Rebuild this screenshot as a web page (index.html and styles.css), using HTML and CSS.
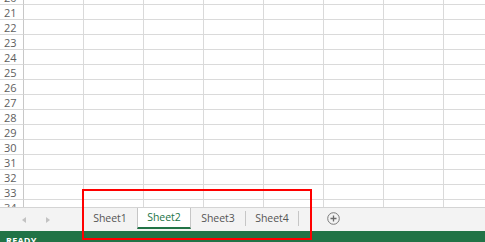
FILE: index.html
```html
<!DOCTYPE html>
<html lang="en">
<head>
    <meta charset="UTF-8">
    <title>Workbook</title>
    <link rel="stylesheet" href="styles.css">
</head>
<body>
    <div class="sheet">
        <div class="grid">
            <div class="row"><div class="rh">20</div><div class="c"></div><div class="c"></div><div class="c"></div><div class="c"></div><div class="c"></div><div class="c"></div><div class="c"></div><div class="c"></div></div>
            <div class="row"><div class="rh">21</div><div class="c"></div><div class="c"></div><div class="c"></div><div class="c"></div><div class="c"></div><div class="c"></div><div class="c"></div><div class="c"></div></div>
            <div class="row"><div class="rh">22</div><div class="c"></div><div class="c"></div><div class="c"></div><div class="c"></div><div class="c"></div><div class="c"></div><div class="c"></div><div class="c"></div></div>
            <div class="row"><div class="rh">23</div><div class="c"></div><div class="c"></div><div class="c"></div><div class="c"></div><div class="c"></div><div class="c"></div><div class="c"></div><div class="c"></div></div>
            <div class="row"><div class="rh">24</div><div class="c"></div><div class="c"></div><div class="c"></div><div class="c"></div><div class="c"></div><div class="c"></div><div class="c"></div><div class="c"></div></div>
            <div class="row"><div class="rh">25</div><div class="c"></div><div class="c"></div><div class="c"></div><div class="c"></div><div class="c"></div><div class="c"></div><div class="c"></div><div class="c"></div></div>
            <div class="row"><div class="rh">26</div><div class="c"></div><div class="c"></div><div class="c"></div><div class="c"></div><div class="c"></div><div class="c"></div><div class="c"></div><div class="c"></div></div>
            <div class="row"><div class="rh">27</div><div class="c"></div><div class="c"></div><div class="c"></div><div class="c"></div><div class="c"></div><div class="c"></div><div class="c"></div><div class="c"></div></div>
            <div class="row"><div class="rh">28</div><div class="c"></div><div class="c"></div><div class="c"></div><div class="c"></div><div class="c"></div><div class="c"></div><div class="c"></div><div class="c"></div></div>
            <div class="row"><div class="rh">29</div><div class="c"></div><div class="c"></div><div class="c"></div><div class="c"></div><div class="c"></div><div class="c"></div><div class="c"></div><div class="c"></div></div>
            <div class="row"><div class="rh">30</div><div class="c"></div><div class="c"></div><div class="c"></div><div class="c"></div><div class="c"></div><div class="c"></div><div class="c"></div><div class="c"></div></div>
            <div class="row"><div class="rh">31</div><div class="c"></div><div class="c"></div><div class="c"></div><div class="c"></div><div class="c"></div><div class="c"></div><div class="c"></div><div class="c"></div></div>
            <div class="row"><div class="rh">32</div><div class="c"></div><div class="c"></div><div class="c"></div><div class="c"></div><div class="c"></div><div class="c"></div><div class="c"></div><div class="c"></div></div>
            <div class="row"><div class="rh">33</div><div class="c"></div><div class="c"></div><div class="c"></div><div class="c"></div><div class="c"></div><div class="c"></div><div class="c"></div><div class="c"></div></div>
            <div class="row"><div class="rh">34</div><div class="c"></div><div class="c"></div><div class="c"></div><div class="c"></div><div class="c"></div><div class="c"></div><div class="c"></div><div class="c"></div></div>
        </div>
    </div>

    <div class="tabbar">
        <div class="nav">
            <span class="arrow left"></span>
            <span class="arrow right"></span>
        </div>
        <div class="tabs">
            <div class="tab">Sheet1</div>
            <div class="tab active">Sheet2</div>
            <div class="tab">Sheet3</div>
            <div class="tab sep">Sheet4</div>
        </div>
        <div class="add">
            <svg width="13" height="13" viewBox="0 0 13 13">
                <circle cx="6.5" cy="6.5" r="5.8" fill="none" stroke="#7a7a7a" stroke-width="1"/>
                <path d="M6.5 3.5v6M3.5 6.5h6" stroke="#6a6a6a" stroke-width="1.3"/>
            </svg>
        </div>
    </div>

    <div class="status">READY</div>

    <!-- annotation box round the sheet tabs -->
    <div class="highlight"></div>
</body>
</html>
```

FILE: styles.css
```css
body {
    margin: 0;
    width: 485px;
    height: 242px;
    overflow: hidden;
    position: relative;
    font-family: "Open Sans", "Liberation Sans", sans-serif;
    background-color: #ffffff;
}
.sheet {
    height: 207px;
    overflow: hidden;
    border-bottom: 1px solid #d4d4d4;
}
.grid {
    margin-top: -10px;
}
.row {
    display: flex;
    height: 15px;
}
.rh {
    width: 24px;
    flex: none;
    box-sizing: border-box;
    padding-left: 4px;
    border-right: 1px solid #c8c8c8;
    border-bottom: 1px solid #dadada;
    font-size: 11px;
    line-height: 15px;
    color: #5e5e5e;
}
.c {
    width: 60px;
    flex: none;
    box-sizing: border-box;
    border-right: 1px solid #dadada;
    border-bottom: 1px solid #dadada;
}
.tabbar {
    display: flex;
    height: 23px;
    background-color: #f3f3f3;
}
.nav {
    width: 83px;
    display: flex;
    align-items: center;
    padding-left: 22px;
    gap: 20px;
    box-sizing: border-box;
}
.arrow {
    width: 0;
    height: 0;
    border-top: 3px solid transparent;
    border-bottom: 3px solid transparent;
}
.arrow.left {
    border-right: 4px solid #c2c2c2;
}
.arrow.right {
    border-left: 4px solid #c2c2c2;
}
.tabs {
    display: flex;
    height: 21px;
}
.tab {
    width: 54px;
    box-sizing: border-box;
    text-align: center;
    font-size: 10.5px;
    line-height: 21px;
    color: #555;
    position: relative;
}
.tab + .tab:not(.active)::before {
    content: "";
    position: absolute;
    left: 0;
    top: 3px;
    height: 15px;
    border-left: 1px solid #c6c6c6;
}
.tab.sep::after {
    content: "";
    position: absolute;
    right: 0;
    top: 3px;
    height: 15px;
    border-right: 1px solid #c6c6c6;
}
.tab.active {
    background-color: #ffffff;
    color: #217346;
    border-left: 1px solid #c6c6c6;
    border-right: 1px solid #c6c6c6;
    border-bottom: 2px solid #217346;
    line-height: 19px;
}
.tab.active + .tab::before {
    display: none;
}
.add {
    margin-left: 28px;
    display: flex;
    align-items: center;
    height: 21px;
}
.add svg {
    display: block;
}
.status {
    height: 22px;
    background-color: #217346;
    color: #ffffff;
    font-size: 9px;
    font-weight: bold;
    padding: 3px 0 0 6px;
    box-sizing: border-box;
    letter-spacing: 0.2px;
}
.highlight {
    position: absolute;
    left: 82px;
    top: 189px;
    width: 230px;
    height: 51px;
    box-sizing: border-box;
    border: 2px solid #ff0000;
}
```
